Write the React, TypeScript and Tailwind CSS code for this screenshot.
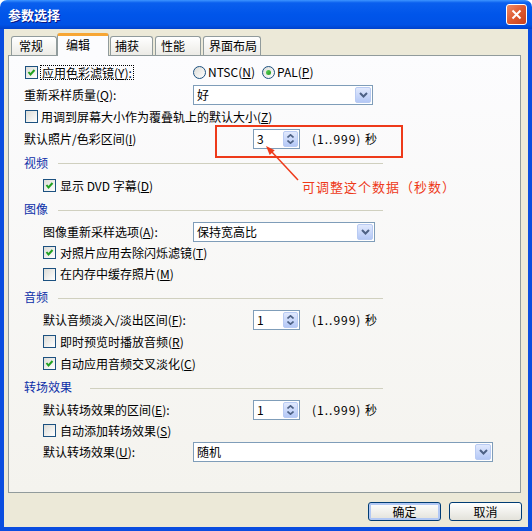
import React from 'react';

const U = ({ c }: { c: string }) => <span className="underline underline-offset-[1px]">{c}</span>;

function Check({ on }: { on?: boolean }) {
  return (
    <span className="relative inline-block h-[13px] w-[13px] shrink-0 border border-[#1C5180] bg-gradient-to-br from-[#DCDCD7] to-white">
      {on && (
        <svg width="11" height="11" viewBox="0 0 11 11" className="absolute left-0 top-0">
          <polyline points="2.5,5 4.5,7.5 8.5,3" fill="none" stroke="#21A121" strokeWidth="2" />
        </svg>
      )}
    </span>
  );
}

function Radio({ on }: { on?: boolean }) {
  return (
    <span className="flex h-[13px] w-[13px] shrink-0 items-center justify-center rounded-full border border-[#1C5180] bg-gradient-to-br from-[#DCDCD7] to-white">
      {on && <span className="h-[5px] w-[5px] rounded-full bg-gradient-to-br from-[#5DD35A] to-[#1E9B1E]" />}
    </span>
  );
}

function Combo({ value, w }: { value: string; w: string }) {
  return (
    <div className={`flex h-[20px] items-center border border-[#7F9DB9] bg-white ${w}`}>
      <span className="flex-1 pl-[3px]">{value}</span>
      <span className="mr-px flex h-[16px] w-[16px] items-center justify-center rounded-[2px] border border-[#B9CBF3] bg-gradient-to-b from-[#E1E9FD] to-[#B4C8F6]">
        <svg width="9" height="6" viewBox="0 0 9 6">
          <polyline points="1,1 4.5,4.5 8,1" fill="none" stroke="#4D6185" strokeWidth="2" />
        </svg>
      </span>
    </div>
  );
}

function Spin({ value }: { value: string }) {
  return (
    <div className="flex h-[20px] w-[47px] items-center border border-[#7F9DB9] bg-white">
      <span className="flex-1 pl-[3px]">{value}</span>
      <span className="mr-px flex h-[16px] w-[15px] flex-col items-center justify-center gap-[2px] rounded-[2px] border border-[#B9CBF3] bg-gradient-to-b from-[#E1E9FD] to-[#B4C8F6]">
        <svg width="7" height="4" viewBox="0 0 7 4">
          <polyline points="0.5,3.5 3.5,0.8 6.5,3.5" fill="none" stroke="#4D6185" strokeWidth="1.6" />
        </svg>
        <svg width="7" height="4" viewBox="0 0 7 4">
          <polyline points="0.5,0.5 3.5,3.2 6.5,0.5" fill="none" stroke="#4D6185" strokeWidth="1.6" />
        </svg>
      </span>
    </div>
  );
}

function Range() {
  return <span className="ml-[12px] tracking-[1px]">(1..999) 秒</span>;
}

function Group({ title, h, gap }: { title: string; h: string; gap: string }) {
  return (
    <div className={`flex w-[359px] items-center ${h}`}>
      <span className="text-[#0C2FA8]">{title}</span>
      <span className={`mt-[2px] h-px flex-1 bg-[#D0D0BF] ${gap}`} />
    </div>
  );
}

function CheckRow({ h, on, children }: { h: string; on?: boolean; children: React.ReactNode }) {
  return (
    <div className={`flex items-center pl-[19px] ${h}`}>
      <Check on={on} />
      <span className="ml-[4px]">{children}</span>
    </div>
  );
}

function SpinRow({ h, value, children }: { h: string; value: string; children: React.ReactNode }) {
  return (
    <div className={`flex items-center pl-[19px] ${h}`}>
      <span className="w-[210px]">{children}</span>
      <Spin value={value} />
      <Range />
    </div>
  );
}

const tabs = [
  { name: '常规', cls: 'w-[46px] pl-[7px]' },
  { name: '编辑', cls: 'w-[52px] pl-[8px]', on: true },
  { name: '捕获', cls: 'ml-px w-[43px] pl-[4px]' },
  { name: '性能', cls: 'ml-[2px] w-[46px] pl-[5px]' },
  { name: '界面布局', cls: 'ml-[2px] w-[58px] pl-[5px]' },
];

export default function App() {
  return (
    <div className="relative flex h-[531px] w-[532px] flex-col overflow-hidden bg-white font-['Noto_Sans_CJK_SC',sans-serif] text-[12px] leading-[14px] text-black">
      {/* title bar */}
      <div className="flex h-[29px] shrink-0 items-center justify-between rounded-t-[7px] bg-[linear-gradient(180deg,#3D95FF_0%,#0A5FEE_10%,#0055EA_50%,#0052E6_85%,#0042CC_100%)]">
        <span className="pl-[8px] text-[13px] font-bold text-white [text-shadow:1px_1px_#0A1883]">参数选择</span>
        <span className="mr-[5px] flex h-[21px] w-[21px] items-center justify-center rounded-[3px] border border-white bg-gradient-to-br from-[#EC8A66] via-[#DE5A30] to-[#C8401C]">
          <svg width="11" height="11" viewBox="0 0 11 11">
            <path d="M1.5 1.5 L9.5 9.5 M9.5 1.5 L1.5 9.5" stroke="white" strokeWidth="2" />
          </svg>
        </span>
      </div>

      {/* body */}
      <div className="flex flex-1 flex-col border-x-[4px] border-b-[4px] border-[#0A4DE0] bg-[#ECE9D8] pl-[4px] pt-[4px]">
        <div className="relative z-10 -mb-px flex h-[23px] items-end pl-[3px]">
          {tabs.map((t) =>
            t.on ? (
              <div
                key={t.name}
                className={`h-[23px] rounded-t-[3px] border-x border-t-[3px] border-x-[#919B9C] border-t-[#F7A634] bg-[#FCFCFE] pt-[2px] ${t.cls}`}
              >
                {t.name}
              </div>
            ) : (
              <div
                key={t.name}
                className={`mb-px flex h-[19px] items-center rounded-t-[3px] border-x border-t border-[#919B9C] bg-gradient-to-b from-white to-[#ECEBE6] ${t.cls}`}
              >
                {t.name}
              </div>
            )
          )}
        </div>

        <div className="flex h-[438px] w-[513px] flex-col border border-[#919B9C] bg-gradient-to-b from-[#FCFCFE] to-[#F4F3EE] pl-[15px] pt-[5px]">
          <div className="flex h-[22px] items-center">
            <div className="flex w-[169px] items-center pl-px">
              <Check on />
              <span className="ml-[2px] border border-dotted border-black px-px leading-[13px]">
                应用色彩滤镜(<U c="Y" />):
              </span>
            </div>
            <div className="flex w-[69px] items-center">
              <Radio />
              <span className="ml-[2px]">NTSC(<U c="N" />)</span>
            </div>
            <Radio on />
            <span className="ml-[2px]">PAL(<U c="P" />)</span>
          </div>

          <div className="flex h-[23px] items-center">
            <span className="w-[169px]">重新采样质量(<U c="Q" />):</span>
            <Combo value="好" w="w-[180px]" />
          </div>

          <div className="flex h-[21px] items-center pl-px">
            <Check />
            <span className="ml-[3px]">用调到屏幕大小作为覆叠轨上的默认大小(<U c="Z" />)</span>
          </div>

          <div className="flex h-[24px] items-center">
            <span className="w-[229px]">默认照片/色彩区间(<U c="I" />)</span>
            <Spin value="3" />
            <Range />
          </div>

          <Group title="视频" h="h-[23px]" gap="ml-[10px]" />
          <CheckRow h="h-[23px]" on>
            显示 DVD 字幕(<U c="D" />)
          </CheckRow>

          <Group title="图像" h="h-[24px]" gap="ml-[10px]" />
          <div className="flex h-[21px] items-center pl-[19px]">
            <span className="w-[150px]">图像重新采样选项(<U c="A" />):</span>
            <Combo value="保持宽高比" w="w-[182px]" />
          </div>
          <CheckRow h="h-[21px]" on>
            对照片应用去除闪烁滤镜(<U c="T" />)
          </CheckRow>
          <CheckRow h="h-[22px]">
            在内存中缓存照片(<U c="M" />)
          </CheckRow>

          <Group title="音频" h="h-[24px]" gap="ml-[10px]" />
          <SpinRow h="h-[22px]" value="1">
            默认音频淡入/淡出区间(<U c="F" />):
          </SpinRow>
          <CheckRow h="h-[21px]">
            即时预览时播放音频(<U c="R" />)
          </CheckRow>
          <CheckRow h="h-[23px]" on>
            自动应用音频交叉淡化(<U c="C" />)
          </CheckRow>

          <Group title="转场效果" h="h-[24px]" gap="ml-[18px]" />
          <SpinRow h="h-[21px]" value="1">
            默认转场效果的区间(<U c="E" />):
          </SpinRow>
          <CheckRow h="h-[21px]">
            自动添加转场效果(<U c="S" />)
          </CheckRow>
          <div className="flex h-[22px] items-center pl-[19px]">
            <span className="w-[150px]">默认转场效果(<U c="U" />):</span>
            <Combo value="随机" w="w-[300px]" />
          </div>
        </div>

        <div className="mt-[9px] flex justify-end gap-[8px] pr-[6px]">
          <button className="flex h-[19px] w-[73px] items-center justify-center rounded-[3px] border border-[#003C74] bg-gradient-to-b from-white to-[#E3E2DA] shadow-[inset_0_0_0_2px_#B2C8F4]">
            确定
          </button>
          <button className="flex h-[19px] w-[73px] items-center justify-center rounded-[3px] border border-[#003C74] bg-gradient-to-b from-white to-[#E3E2DA]">
            取消
          </button>
        </div>
      </div>

      {/* red annotation */}
      <div className="absolute left-[215px] top-[125px] h-[33px] w-[188px] border-[2px] border-[#EE3A1A]" />
      <svg className="absolute left-[260px] top-[140px]" width="45" height="45" viewBox="0 0 45 45">
        <line x1="38" y1="40" x2="11" y2="11" stroke="#EE3A1A" strokeWidth="1.5" />
        <polygon points="6,6 14.7,10.2 9.7,15" fill="#EE3A1A" />
      </svg>
      <span className="absolute left-[302px] top-[179px] text-[13px] leading-[16px] tracking-[1px] text-[#EE3A1A]">
        可调整这个数据（秒数）
      </span>
    </div>
  );
}
